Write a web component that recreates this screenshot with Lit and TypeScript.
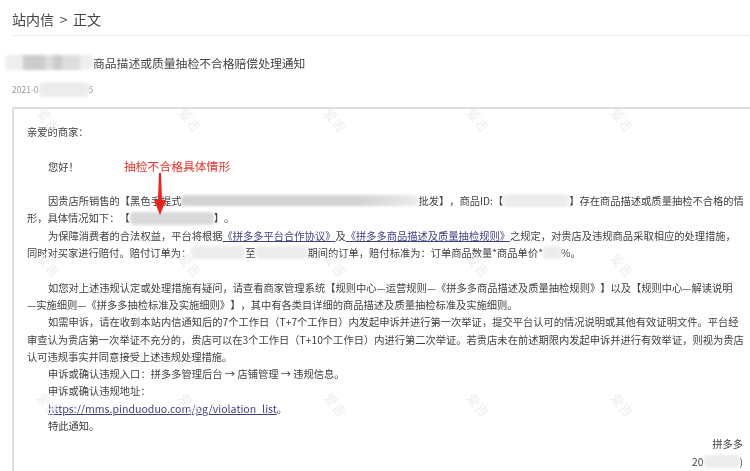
import { LitElement, html, css } from "lit";
import { customElement } from "lit/decorators.js";

const marks: [number, number][] = [];
for (const y of [120, 265, 405]) for (const x of [48, 190, 335, 478, 622]) marks.push([x, y]);

const FC = "\uFF0C";
const CO = "\uFF1A";
const EX = "\uFF01";
const LP = "\uFF08";
const RP = "\uFF09";

@customElement("app-root")
export class AppRoot extends LitElement {
  static styles = css`
    :host { display: block; width: 750px; height: 471px; overflow: hidden; background: #fff; }
    .page {
      position: relative; height: 471px; overflow: hidden; box-sizing: border-box;
      font-family: "Noto Sans CJK SC", "Liberation Sans", sans-serif; color: #4a4a4a;
      filter: blur(0.55px); text-spacing-trim: space-all;
    }
    .head {
      margin-left: 12px; height: 36px; box-sizing: border-box; padding-top: 9px;
      border-bottom: 1px solid #eeeeee; font-size: 14px; line-height: 20px; color: #444; white-space: pre; word-spacing: 2.5px;
    }
    .title { display: flex; align-items: center; height: 18px; margin: 17px 0 0 5px; font-size: 11.8px; color: #444; white-space: nowrap; }
    .date { display: flex; align-items: center; height: 14px; margin: 11px 0 0 12px; font-size: 8.5px; color: #999; white-space: nowrap; }
    .box {
      margin: 11px 0 0 12px; height: 400px; box-sizing: border-box; padding: 14px 7px 0 13px;
      border-top: 2px solid #dedede; border-left: 2px solid #dedede;
    }
    .ln { height: 17.3px; line-height: 17.3px; font-size: 10.28px; white-space: nowrap; display: flex; align-items: center; color: #3f3f3f; }
    .in { padding-left: 21px; }
    .sig { justify-content: flex-end; position: relative; top: 1px; }
    a { color: #3f3e8a; text-decoration: underline; }
    .url { font-size: 10.6px; }
    .g { display: inline-block; flex: none; height: 11px; background: #d9d9d9; filter: blur(1.6px); border-radius: 4px; }
    .lt { background: #ececec; height: 13px; }
    .pix {
      height: 15px;
      background: linear-gradient(90deg, #eee 0 20%, #ccc 20% 45%, #ddd 45% 55%, #ccc 55% 65%, #ddd 65% 85%, #eee 85%);
    }
    .mix { background: linear-gradient(90deg, #d2d2d2 0 75%, #ececec 100%); }
    .tip { position: absolute; left: 124px; top: 158px; font-size: 11.8px; line-height: 16px; color: #f0302a; white-space: nowrap; }
    .arrow { position: absolute; left: 154px; top: 173px; }
    .wm { position: absolute; font-size: 13px; line-height: 14px; color: #eeeeee; transform: translate(-50%, -50%) rotate(50deg); white-space: nowrap; }
  `;

  render() {
    return html`<div class="page">
      ${marks.map(([x, y]) => html`<span class="wm" style="left:${x}px;top:${y}px">爱吉</span>`)}
      <div class="head">站内信 &gt; 正文</div>
      <div class="title"><span class="g pix" style="width:88px"></span><span>商品描述或质量抽检不合格赔偿处理通知</span></div>
      <div class="date"><span>2021-0</span><span class="g lt" style="width:50px;height:15px"></span><span>5</span></div>
      <div class="box">
        <div class="ln">亲爱的商家${CO}</div>
        <div class="ln"></div>
        <div class="ln in">您好${EX}</div>
        <div class="ln"></div>
        <div class="ln in">因贵店所销售的【黑色手提式<span class="g mix" style="width:237px"></span>批发】${FC}商品ID:【<span class="g lt" style="width:66px"></span>】存在商品描述或质量抽检不合格的情</div>
        <div class="ln">形${FC}具体情况如下${CO}【<span class="g" style="width:84px;height:13px"></span>】。</div>
        <div class="ln in">为保障消费者的合法权益${FC}平台将根据<a>《拼多多平台合作协议》</a>及<a>《拼多多商品描述及质量抽检规则》</a>之规定${FC}对贵店及违规商品采取相应的处理措施${FC}</div>
        <div class="ln">同时对买家进行赔付。赔付订单为${CO}<span class="g lt" style="width:54px"></span>至<span class="g lt" style="width:52px"></span>期间的订单${FC}赔付标准为${CO}订单商品数量*商品单价*<span class="g lt" style="width:18px"></span>%。</div>
        <div class="ln"></div>
        <div class="ln in">如您对上述违规认定或处理措施有疑问${FC}请查看商家管理系统【规则中心—运营规则—《拼多多商品描述及质量抽检规则》】以及【规则中心—解读说明</div>
        <div class="ln">—实施细则—《拼多多抽检标准及实施细则》】${FC}其中有各类目详细的商品描述及质量抽检标准及实施细则。</div>
        <div class="ln in">如需申诉${FC}请在收到本站内信通知后的7个工作日${LP}T+7个工作日${RP}内发起申诉并进行第一次举证${FC}提交平台认可的情况说明或其他有效证明文件。平台经</div>
        <div class="ln">审查认为贵店第一次举证不充分的${FC}贵店可以在3个工作日${LP}T+10个工作日${RP}内进行第二次举证。若贵店未在前述期限内发起申诉并进行有效举证${FC}则视为贵店</div>
        <div class="ln">认可违规事实并同意接受上述违规处理措施。</div>
        <div class="ln in">申诉或确认违规入口${CO}拼多多管理后台 → 店铺管理 → 违规信息。</div>
        <div class="ln in">申诉或确认违规地址${CO}</div>
        <div class="ln in"><a class="url">https://mms.pinduoduo.com/pg/violation_list</a>。</div>
        <div class="ln in">特此通知。</div>
        <div class="ln sig">拼多多</div>
        <div class="ln sig">20<span class="g lt" style="width:36px"></span>)</div>
      </div>
      <div class="tip">抽检不合格具体情形</div>
      <svg class="arrow" width="12" height="42" viewBox="0 0 12 42"><path d="M5 0h2l1 27h4L6 42 0 27h4z" fill="#f0201c"/></svg>
    </div>`;
  }
}
